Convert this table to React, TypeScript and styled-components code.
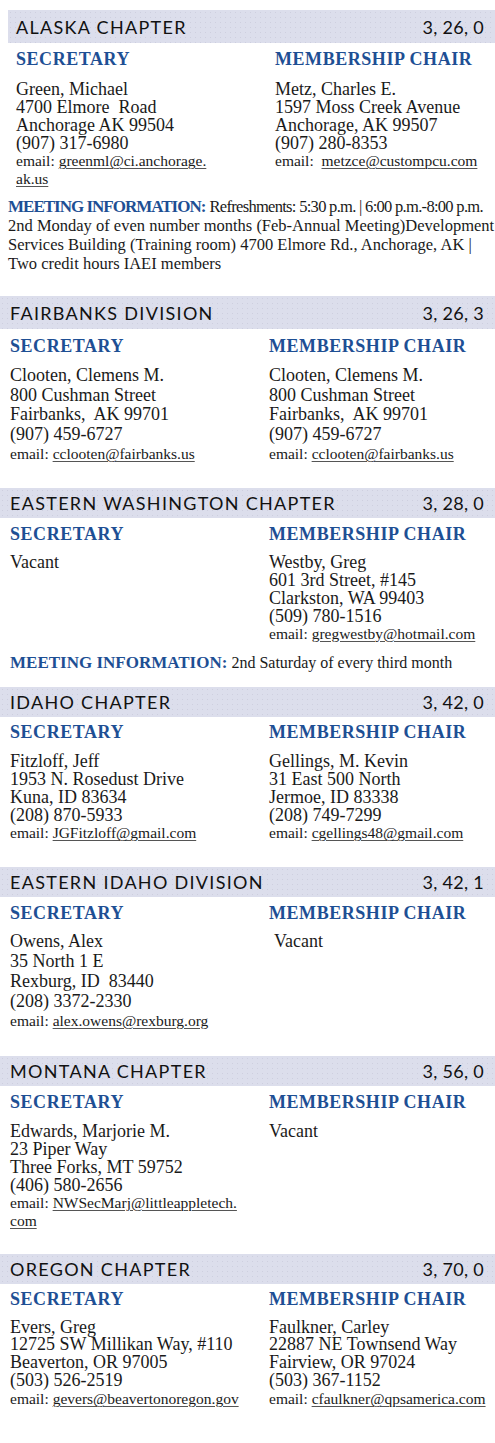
import React from 'react';
import styled, { createGlobalStyle } from 'styled-components';

const GlobalStyle = createGlobalStyle`
  body {
    margin: 0;
    background: #fff;
  }
`;

const Page = styled.div`
  width: 495px;
  padding-top: 10px;
  font-family: "Liberation Serif", "Times New Roman", serif;
  color: #1a1a1a;
`;

const Block = styled.section<{ $inset?: boolean; $gap: number }>`
  margin-left: ${(p) => (p.$inset ? 8 : 0)}px;
  margin-bottom: ${(p) => p.$gap}px;
`;

const HeaderBar = styled.div<{ $height: number; $inset?: boolean }>`
  display: flex;
  align-items: center;
  justify-content: space-between;
  height: ${(p) => p.$height}px;
  padding: 0 11px 0 ${(p) => (p.$inset ? 8 : 10)}px;
  background-color: #dcdeec;
  background-image: radial-gradient(circle, rgba(200, 202, 218, 0.7) 0.6px, transparent 0.9px);
  background-size: 5px 5px;
  font-family: Lato, "Noto Sans", sans-serif;
  font-size: 18px;
  letter-spacing: 1.3px;
  color: #111;
`;

const Code = styled.span`
  letter-spacing: 0.3px;
`;

const Columns = styled.div<{ $inset?: boolean }>`
  display: grid;
  grid-template-columns: 259px 1fr;
  padding-left: ${(p) => (p.$inset ? 8 : 10)}px;
`;

const RoleTitle = styled.div<{ $top: number }>`
  margin-top: ${(p) => p.$top}px;
  font-size: 18px;
  line-height: 22px;
  font-weight: bold;
  letter-spacing: 0.55px;
  color: #1e4f94;
`;

const Entry = styled.div<{ $lh: number; $gap: number }>`
  margin-top: ${(p) => p.$gap}px;
  line-height: ${(p) => p.$lh}px;
`;

const Line = styled.div<{ $indent?: number }>`
  font-size: 18px;
  white-space: pre;
  padding-left: ${(p) => p.$indent || 0}px;
`;

const EmailLine = styled.div`
  font-size: 15.5px;
  white-space: pre;
`;

const Link = styled.span`
  text-decoration: underline;
  text-decoration-color: #555;
  text-decoration-thickness: 1px;
  text-underline-offset: 2px;
`;

const Meeting = styled.div<{ $inset?: boolean; $tight?: boolean }>`
  margin-top: ${(p) => (p.$tight ? 9 : 10)}px;
  padding-left: ${(p) => (p.$inset ? 0 : 10)}px;
  font-size: ${(p) => (p.$tight ? 16.5 : 16)}px;
  line-height: 19px;
  white-space: nowrap;
`;

const MeetingLabel = styled.span<{ $tight?: boolean }>`
  font-size: 17px;
  font-weight: bold;
  letter-spacing: ${(p) => (p.$tight ? -1 : 0)}px;
  color: #1e4f94;
`;

const Squeezed = styled.span<{ $tight?: boolean }>`
  letter-spacing: ${(p) => (p.$tight ? -0.7 : 0)}px;
`;

type Person = {
  lines: string[];
  email?: string[];
  emailGap?: string;
  indent?: number;
};

type Chapter = {
  name: string;
  code: string;
  header: number;
  titleTop: number;
  bodyGap: number;
  lh: number;
  gap: number;
  inset?: boolean;
  secretary: Person;
  chair: Person;
  meeting?: string[];
};

const chapters: Chapter[] = [
  {
    name: 'ALASKA CHAPTER',
    code: '3, 26, 0',
    header: 33,
    titleTop: 5,
    bodyGap: 10,
    lh: 18,
    gap: 23,
    inset: true,
    secretary: {
      lines: ['Green, Michael', '4700 Elmore  Road', 'Anchorage AK 99504', '(907) 317-6980'],
      email: ['greenml@ci.anchorage.', 'ak.us'],
    },
    chair: {
      lines: ['Metz, Charles E.', '1597 Moss Creek Avenue', 'Anchorage, AK 99507', '(907) 280-8353'],
      email: ['metzce@custompcu.com'],
      emailGap: '  ',
    },
    meeting: [
      'Refreshments: 5:30 p.m. | 6:00 p.m.-8:00 p.m.',
      '2nd Monday of even number months (Feb-Annual Meeting)Development',
      'Services Building (Training room) 4700 Elmore Rd., Anchorage, AK |',
      'Two credit hours IAEI members',
    ],
  },
  {
    name: 'FAIRBANKS DIVISION',
    code: '3, 26, 3',
    header: 33,
    titleTop: 6,
    bodyGap: 9,
    lh: 19.5,
    gap: 24,
    secretary: {
      lines: ['Clooten, Clemens M.', '800 Cushman Street', 'Fairbanks,  AK 99701', '(907) 459-6727'],
      email: ['cclooten@fairbanks.us'],
    },
    chair: {
      lines: ['Clooten, Clemens M.', '800 Cushman Street', 'Fairbanks,  AK 99701', '(907) 459-6727'],
      email: ['cclooten@fairbanks.us'],
    },
  },
  {
    name: 'EASTERN WASHINGTON CHAPTER',
    code: '3, 28, 0',
    header: 30,
    titleTop: 5,
    bodyGap: 8,
    lh: 18,
    gap: 15,
    secretary: { lines: ['Vacant'] },
    chair: {
      lines: ['Westby, Greg', '601 3rd Street, #145', 'Clarkston, WA 99403', '(509) 780-1516'],
      email: ['gregwestby@hotmail.com'],
    },
    meeting: ['2nd Saturday of every third month'],
  },
  {
    name: 'IDAHO CHAPTER',
    code: '3, 42, 0',
    header: 30,
    titleTop: 4,
    bodyGap: 9,
    lh: 18.2,
    gap: 24,
    secretary: {
      lines: ['Fitzloff, Jeff', '1953 N. Rosedust Drive', 'Kuna, ID 83634', '(208) 870-5933'],
      email: ['JGFitzloff@gmail.com'],
    },
    chair: {
      lines: ['Gellings, M. Kevin', '31 East 500 North', 'Jermoe, ID 83338', '(208) 749-7299'],
      email: ['cgellings48@gmail.com'],
    },
  },
  {
    name: 'EASTERN IDAHO DIVISION',
    code: '3, 42, 1',
    header: 30,
    titleTop: 5,
    bodyGap: 7,
    lh: 20,
    gap: 25,
    secretary: {
      lines: ['Owens, Alex', '35 North 1 E', 'Rexburg, ID  83440', '(208) 3372-2330'],
      email: ['alex.owens@rexburg.org'],
    },
    chair: { lines: ['Vacant'], indent: 5 },
  },
  {
    name: 'MONTANA CHAPTER',
    code: '3, 56, 0',
    header: 30,
    titleTop: 5,
    bodyGap: 9,
    lh: 18,
    gap: 24,
    secretary: {
      lines: ['Edwards, Marjorie M.', '23 Piper Way', 'Three Forks, MT 59752', '(406) 580-2656'],
      email: ['NWSecMarj@littleappletech.', 'com'],
    },
    chair: { lines: ['Vacant'] },
  },
  {
    name: 'OREGON CHAPTER',
    code: '3, 70, 0',
    header: 30,
    titleTop: 4,
    bodyGap: 9,
    lh: 17.9,
    gap: 20,
    secretary: {
      lines: ['Evers, Greg', '12725 SW Millikan Way, #110', 'Beaverton, OR 97005', '(503) 526-2519'],
      email: ['gevers@beavertonoregon.gov'],
    },
    chair: {
      lines: ['Faulkner, Carley', '22887 NE Townsend Way', 'Fairview, OR 97024', '(503) 367-1152'],
      email: ['cfaulkner@qpsamerica.com'],
    },
  },
];

const PersonColumn = ({ title, person, c }: { title: string; person: Person; c: Chapter }) => (
  <div>
    <RoleTitle $top={c.titleTop}>{title}</RoleTitle>
    <Entry $lh={c.lh} $gap={c.bodyGap}>
      {person.lines.map((l, i) => (
        <Line key={i} $indent={person.indent}>{l}</Line>
      ))}
      {person.email &&
        person.email.map((e, i) => (
          <EmailLine key={'e' + i}>
            {i === 0 && `email:${person.emailGap || ' '}`}
            <Link>{e}</Link>
          </EmailLine>
        ))}
    </Entry>
  </div>
);

const App = () => (
  <Page>
    <GlobalStyle />
    {chapters.map((c) => (
      <Block key={c.name} $inset={c.inset} $gap={c.gap}>
        <HeaderBar $height={c.header} $inset={c.inset}>
          <span>{c.name}</span>
          <Code>{c.code}</Code>
        </HeaderBar>
        <Columns $inset={c.inset}>
          <PersonColumn title="SECRETARY" person={c.secretary} c={c} />
          <PersonColumn title="MEMBERSHIP CHAIR" person={c.chair} c={c} />
        </Columns>
        {c.meeting && (
          <Meeting $inset={c.inset} $tight={c.inset}>
            <MeetingLabel $tight={c.inset}>MEETING INFORMATION:</MeetingLabel>{' '}
            {c.meeting.map((m, i) => (
              <React.Fragment key={i}>
                {i > 0 && <br />}
                {i === 0 ? <Squeezed $tight={c.inset}>{m}</Squeezed> : m}
              </React.Fragment>
            ))}
          </Meeting>
        )}
      </Block>
    ))}
  </Page>
);

export default App;
